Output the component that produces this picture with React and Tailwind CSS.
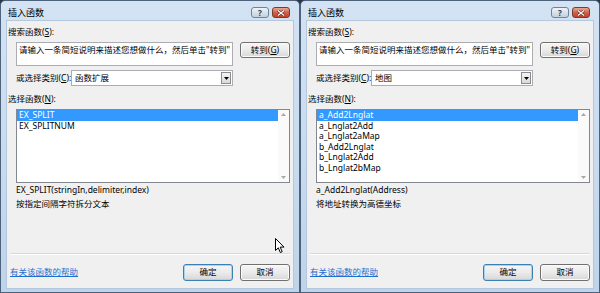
import React from "react";

const FONT = { fontFamily: '"Noto Sans","Noto Sans CJK SC",sans-serif' };

function Btn({ children, primary }) {
  return (
    <div
      className={
        "flex h-[17px] w-[50px] items-center justify-center rounded-[3px] border bg-linear-to-b from-[#f6f6f6] via-[#ebebeb] to-[#d7d7d7] text-[8.5px] leading-none text-black " +
        (primary ? "border-[#3c7fb1] shadow-[inset_0_0_0_1px_#a6d4f1]" : "border-[#707070] shadow-[inset_0_0_0_1px_#fbfbfb]")
      }
    >
      {children}
    </div>
  );
}

function Dialog({ category, items, sig, desc, cursor }) {
  return (
    <div className="relative flex h-[293px] w-[300px] flex-col rounded-t-[5px] border border-[#4d637c] bg-linear-to-b from-[#d3e3f4] to-[#bfd4ea]">
      {/* title bar */}
      <div className="flex h-[20px] items-start pl-[7px] pr-[9px]">
        <span className="mt-[6px] text-[9px] leading-[12px] text-black">插入函数</span>
        <div className="ml-auto mt-[6px] flex gap-[3px]">
          <div className="flex h-[11px] w-[18px] items-center justify-center rounded-[3px] border border-[#6f8399] bg-linear-to-b from-[#eef3f9] to-[#c3d0df] text-[8px] font-bold leading-none text-[#2f3b4a]">
            ?
          </div>
          <div className="flex h-[11px] w-[18px] items-center justify-center rounded-[3px] border border-[#7b3a30] bg-linear-to-b from-[#e9a795] via-[#d0614a] to-[#c2412a]">
            <svg width="8" height="6" viewBox="0 0 8 6">
              <path d="M1 0.5 L7 5.5 M7 0.5 L1 5.5" stroke="#5a2018" strokeWidth="2.4" />
              <path d="M1 0.5 L7 5.5 M7 0.5 L1 5.5" stroke="#ffffff" strokeWidth="1.3" />
            </svg>
          </div>
        </div>
      </div>

      {/* client area */}
      <div className="mx-[6px] flex h-[267px] flex-col bg-[#f0f0f0] text-[8.5px] text-black shadow-[0_0_0_1px_#b4c7dc]">
        <div className="h-[21px] pl-[1px] leading-[21px]">
          搜索函数(<span className="underline">S</span>):
        </div>
        <div className="flex items-start pl-[9px]">
          <div className="h-[24px] w-[217px] border border-[#abadb3] bg-white px-[2px] pt-[1px] leading-[11px]">
            请输入一条简短说明来描述您想做什么，然后单击"转到"
          </div>
          <div className="ml-[7px]">
            <div className="flex h-[16px] w-[50px] items-center justify-center rounded-[3px] border border-[#707070] bg-linear-to-b from-[#f6f6f6] via-[#ebebeb] to-[#d7d7d7] leading-none shadow-[inset_0_0_0_1px_#fbfbfb]">
              转到(<span className="underline">G</span>)
            </div>
          </div>
        </div>
        <div className="mt-[4px] flex h-[16px] items-center pl-[9px]">
          <div className="w-[55px] whitespace-nowrap">
            或选择类别(<span className="underline">C</span>):
          </div>
          <div className="flex h-[16px] w-[162px] items-center border border-[#abadb3] bg-white pl-[3px]">
            <span>{category}</span>
            <div className="ml-auto mr-[1px] flex h-[12px] w-[10px] items-center justify-center border border-[#8a8c8f] bg-linear-to-b from-[#f4f4f4] to-[#d9d9d9]">
              <svg width="5" height="3" viewBox="0 0 5 3">
                <path d="M0 0 H5 L2.5 3 Z" fill="#000" />
              </svg>
            </div>
          </div>
        </div>
        <div className="flex h-[23px] items-center pl-[1px] pt-[3px]">
          选择函数(<span className="underline">N</span>):
        </div>
        <div className="ml-[9px] flex h-[74px] w-[274px] border border-[#828790] bg-white">
          <div className="flex-1 pt-0">
            {items.map((it, i) => (
              <div
                key={it}
                className={
                  "h-[10.5px] pl-[2px] leading-[10.5px] " +
                  (i === 0 ? "bg-[#3399ff] text-white" : "text-black")
                }
              >
                {it}
              </div>
            ))}
          </div>
          <div className="flex w-[11px] flex-col items-center justify-between bg-[#fafafa] py-[3px]">
            <svg width="5" height="3" viewBox="0 0 5 3">
              <path d="M0 3 H5 L2.5 0 Z" fill="#a8a8a8" />
            </svg>
            <svg width="5" height="3" viewBox="0 0 5 3">
              <path d="M0 0 H5 L2.5 3 Z" fill="#a8a8a8" />
            </svg>
          </div>
        </div>
        <div className="pl-[9px] leading-[14px]">
          <div>{sig}</div>
          <div>{desc}</div>
        </div>
        <div className="flex-1" />
        <div className="mx-[3px] h-[1px] bg-[#d6d9dc] shadow-[0_1px_0_#ffffff]" />
        <div className="flex h-[34px] items-start pt-[10px]">
          <div className="flex h-[17px] w-full items-center pl-[3px] pr-[3px]">
            <span className="text-[#1f6fd0] underline">有关该函数的帮助</span>
            <div className="ml-auto flex gap-[7px]">
              <Btn primary>确定</Btn>
              <Btn>取消</Btn>
            </div>
          </div>
        </div>
      </div>

      {cursor && (
        <svg
          className="absolute left-[274px] top-[237px]"
          width="11"
          height="16"
          viewBox="0 0 11 16"
        >
          <path
            d="M0.5 0.5 L0.5 12.5 L3.3 9.8 L5.3 14.5 L7.2 13.7 L5.2 9.1 L9 9.1 Z"
            fill="#ffffff"
            stroke="#000000"
            strokeWidth="1"
            strokeLinejoin="round"
          />
        </svg>
      )}
    </div>
  );
}

export default function App() {
  return (
    <div className="flex h-[293px] w-[600px] bg-[#2a3542]" style={FONT}>
      <Dialog
        category="函数扩展"
        items={["EX_SPLIT", "EX_SPLITNUM"]}
        sig="EX_SPLIT(stringIn,delimiter,index)"
        desc="按指定间隔字符拆分文本"
        cursor
      />
      <Dialog
        category="地图"
        items={[
          "a_Add2Lnglat",
          "a_Lnglat2Add",
          "a_Lnglat2aMap",
          "b_Add2Lnglat",
          "b_Lnglat2Add",
          "b_Lnglat2bMap",
        ]}
        sig="a_Add2Lnglat(Address)"
        desc="将地址转换为高德坐标"
      />
    </div>
  );
}
